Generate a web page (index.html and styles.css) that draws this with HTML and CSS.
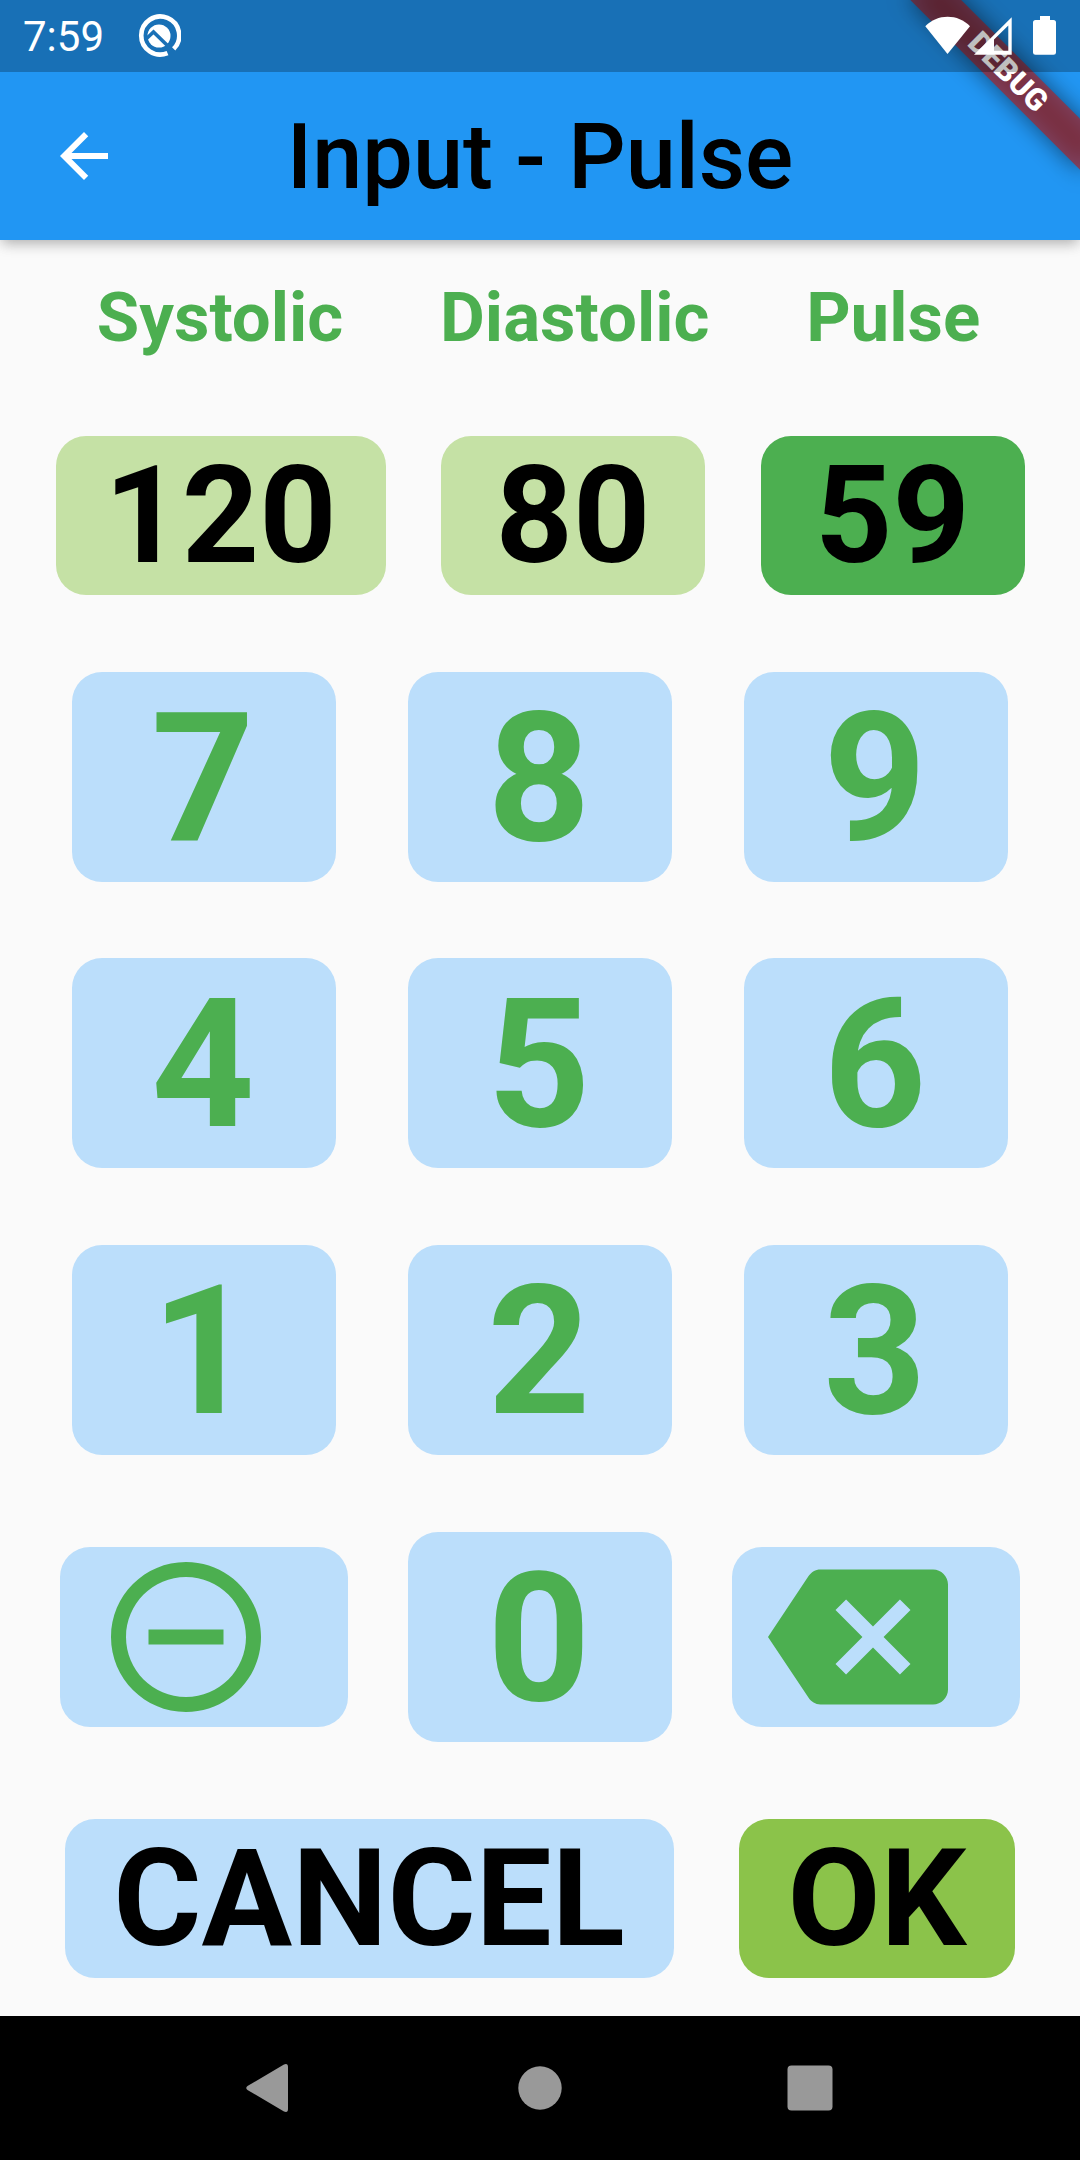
FILE: index.html
```html
<!DOCTYPE html>
<html lang="en">
<head>
<meta charset="utf-8">
<title>Input - Pulse</title>
<link rel="stylesheet" href="styles.css">
</head>
<body>
<div class="screen">
  <header class="top">
    <div class="status-space"></div>
    <div class="app-bar">
      <svg class="back" viewBox="0 0 24 24"><path fill="#fff" d="M20 11H7.83l5.59-5.59L12 4l-8 8 8 8 1.41-1.41L7.83 13H20v-2z"/></svg>
      <h1 class="title">Input - Pulse</h1>
    </div>
  </header>

  <main class="content">
    <div class="row labels"><span>Systolic</span><span>Diastolic</span><span>Pulse</span></div>
    <div class="row values">
      <div class="value value-wide">120</div>
      <div class="value">80</div>
      <div class="value active">59</div>
    </div>
    <div class="row keys"><button class="key">7</button><button class="key">8</button><button class="key">9</button></div>
    <div class="row keys"><button class="key">4</button><button class="key">5</button><button class="key">6</button></div>
    <div class="row keys"><button class="key">1</button><button class="key">2</button><button class="key">3</button></div>
    <div class="row keys">
      <button class="icon-key"><svg viewBox="0 0 24 24"><path d="M7 11v2h10v-2H7zm5-9C6.48 2 2 6.48 2 12s4.48 10 10 10 10-4.480 10-10S17.52 2 12 2zm0 18c-4.410 0-8-3.590-8-8s3.590-8 8-8 8 3.590 8 8-3.590 8-8 8z"/></svg></button>
      <button class="key">0</button>
      <button class="icon-key"><svg viewBox="0 0 24 24"><path d="M22 3H7c-.69 0-1.230.35-1.590.88L0 12l5.410 8.110c.36.53.9.89 1.590.89h15c1.100 0 2-.9 2-2V5c0-1.100-.9-2-2-2zm-3 12.590L17.590 17 14 13.410 10.410 17 9 15.590 12.590 12 9 8.410 10.410 7 14 10.590 17.590 7 19 8.410 15.410 12 19 15.590z"/></svg></button>
    </div>
    <div class="row actions"><button class="action cancel">CANCEL</button><button class="action ok">OK</button></div>
  </main>

  <nav class="nav-bar">
    <svg viewBox="0 0 48 48"><path d="M1.500 22Q-1 24 1.500 26L38 47.500Q42 49 42 45V3Q42-1 38 .5Z"/></svg>
    <svg viewBox="0 0 48 48"><circle cx="24" cy="24" r="21.700"/></svg>
    <svg viewBox="0 0 48 48"><rect x="1.500" y="1.500" width="45" height="45" rx="4"/></svg>
  </nav>

  <div class="debug">
    <div class="debug-band debug-shadow"></div>
    <div class="debug-band debug-label">DEBUG</div>
  </div>

  <div class="status-bar">
    <span class="time">7:59</span>
    <svg class="notice" viewBox="0 0 44 44">
      <path d="M37.300 34.200A19 19 0 1 0 31.400 38.600" transform="rotate(3 22 22)" fill="none" stroke="#fff" stroke-width="4.600"/>
      <circle cx="22" cy="22" r="11.500" fill="#fff"/>
      <path d="M8 26L16.500 18L34 35" fill="none" stroke="#1a70b6" stroke-width="3.600"/>
    </svg>
    <svg class="system" viewBox="0 0 140 48">
      <path fill="#fff" d="M5.300 26.300C17 13.500 38.300 13.500 50 26.300L27.500 54z"/>
      <path fill="#fff" fill-rule="evenodd" d="M91.700 17.300V54.700H54zM88.300 25.500L74 39.500V50.700H88.300z"/>
      <path fill="#fff" d="M120 16h10v4h3.500q2.500 0 2.500 2.500v30q0 2.200-2.500 2.200h-18q-2.500 0-2.500-2.200v-30q0-2.500 2.500-2.500h4.500z"/>
    </svg>
  </div>
</div>
</body>
</html>
```
FILE: styles.css
```css
* {
  box-sizing: border-box;
}

body {
  margin: 0;
  font-family: Roboto, sans-serif;
  background: #fafafa;
}

.screen {
  position: relative;
  display: flex;
  flex-direction: column;
  width: 1080px;
  height: 2160px;
  overflow: hidden;
}

.top {
  flex: none;
  background: #2196f3;
  box-shadow: 0 6px 12px -3px rgba(0, 0, 0, 0.2), 0 3px 15px rgba(0, 0, 0, 0.14);
}

.status-space {
  height: 72px;
}

.app-bar {
  display: grid;
  grid-template-columns: 168px 1fr 168px;
  align-items: center;
  height: 168px;
}

.back {
  width: 72px;
  height: 72px;
  margin-left: 48px;
}

.title {
  margin: 0;
  padding-top: 3px;
  font-size: 90px;
  font-weight: 500;
  line-height: 108px;
  text-align: center;
  white-space: nowrap;
}

.content {
  flex: 1;
  display: flex;
  flex-direction: column;
  justify-content: space-around;
}

.row {
  display: flex;
  justify-content: space-evenly;
  align-items: center;
}

.labels {
  height: 81px;
  padding-right: 3px;
  padding-bottom: 2px;
  color: #4caf50;
  font-size: 69px;
  font-weight: 700;
  line-height: 79px;
}

button {
  border: 0;
  padding: 0;
  font-family: inherit;
}

.value,
.key,
.icon-key,
.action {
  border-radius: 30px;
  font-weight: 700;
  text-align: center;
}

.value {
  width: 264px;
  height: 159px;
  padding-top: 1px;
  background: #c5e1a5;
  font-size: 135px;
  line-height: 159px;
}

.value-wide {
  width: 330px;
}

.active {
  background: #4caf50;
}

.key {
  width: 264px;
  height: 210px;
  padding: 4px 2px 0 0;
  background: #bbdefb;
  color: #4caf50;
  font-size: 180px;
  line-height: 206px;
}

.icon-key {
  width: 288px;
  height: 180px;
  padding: 0 72px 0 36px;
  background: #bbdefb;
}

.icon-key svg {
  display: block;
  width: 180px;
  height: 180px;
  fill: #4caf50;
}

.action {
  height: 159px;
  padding-top: 2px;
  color: #000;
  font-size: 135px;
  line-height: 157px;
}

.cancel {
  width: 609px;
  padding-right: 1px;
  background: #bbdefb;
}

.ok {
  width: 276px;
  background: #8bc34a;
}

.nav-bar {
  flex: none;
  display: flex;
  justify-content: center;
  align-items: center;
  gap: 222px;
  height: 144px;
  background: #000;
}

.nav-bar svg {
  width: 48px;
  height: 48px;
  fill: #999;
}

/* Ribbon drawn across the top right corner, under the status bar tint */
.debug {
  position: absolute;
  top: 0;
  right: 0;
  width: 300px;
  height: 300px;
  overflow: hidden;
}

.debug-band {
  position: absolute;
  top: 84px;
  left: 180px;
  width: 240px;
  height: 36px;
  transform-origin: 120px -84px;
  transform: rotate(45deg);
}

.debug-shadow {
  background: rgba(0, 0, 0, 0.5);
  filter: blur(11.9px);
}

.debug-label {
  background: rgba(183, 28, 28, 0.627);
  color: #fff;
  font-size: 30.6px;
  font-weight: 900;
  line-height: 36px;
  text-align: center;
}

.status-bar {
  position: absolute;
  top: 0;
  left: 0;
  display: flex;
  align-items: center;
  width: 1080px;
  height: 72px;
  padding-left: 23px;
  background: rgba(0, 0, 0, 0.25);
  color: #fff;
}

.time {
  width: 114px;
  padding-top: 1px;
  font-size: 42px;
  line-height: 72px;
}

.notice {
  width: 44px;
  height: 44px;
}

.system {
  width: 140px;
  height: 48px;
  margin-left: auto;
  margin-right: 20px;
  align-self: flex-start;
  overflow: visible;
}
```
